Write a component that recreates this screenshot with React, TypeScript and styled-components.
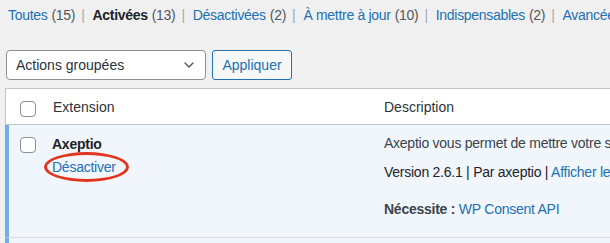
import React from "react";
import styled, { createGlobalStyle } from "styled-components";

const GlobalStyle = createGlobalStyle`
  html, body {
    margin: 0;
    padding: 0;
    background: #f0f0f1;
    overflow: hidden;
  }
  body {
    font-family: "Liberation Sans", Arial, sans-serif;
    font-size: 14px;
    line-height: 20px;
    color: #3c434a;
  }
`;

const Page = styled.div`
  width: 900px;
  padding: 5px 0 0 0;
`;

const Filters = styled.ul`
  display: flex;
  margin: 0 0 0 8px;
  padding: 0;
  list-style: none;
  color: #646970;
  white-space: nowrap;
  letter-spacing: -0.3px;
`;

const FilterItem = styled.li`
  display: flex;
  gap: 4px;
`;

const Sep = styled.span`
  color: #a7aaad;
  margin: 0 4px 0 6px;
`;

const FilterLink = styled.a<{ $current?: boolean }>`
  color: ${(p) => (p.$current ? "#1d2327" : "#2271b1")};
  font-weight: ${(p) => (p.$current ? 700 : 400)};
  text-decoration: none;
`;

const Count = styled.span`
  color: #50575e;
`;

const Toolbar = styled.div`
  display: flex;
  gap: 6px;
  margin: 25px 0 0 6px;
  height: 30px;
`;

const Select = styled.div`
  box-sizing: border-box;
  width: 200px;
  height: 30px;
  border: 1px solid #8c8f94;
  border-radius: 4px;
  background: #fff;
  display: flex;
  align-items: center;
  justify-content: space-between;
  padding: 0 11px 0 9px;
  color: #2c3338;
`;

const Button = styled.button`
  box-sizing: border-box;
  height: 30px;
  width: 80px;
  border: 1px solid #2271b1;
  border-radius: 3px;
  background: #f6f7f7;
  color: #2271b1;
  font: inherit;
  padding: 0;
`;

const Table = styled.div`
  margin: 8px 0 0 5px;
  border-top: 1px solid #c3c4c7;
`;

const Row = styled.div<{ $active?: boolean; $head?: boolean }>`
  display: grid;
  grid-template-columns: ${(p) => (p.$active ? "34px" : "37px")} 331px 1fr;
  background: ${(p) => (p.$active ? "#f0f6fc" : "#fff")};
  border-left: ${(p) => (p.$active ? "4px solid #72aee6" : "1px solid #c3c4c7")};
  border-bottom: 1px solid ${(p) => (p.$head ? "#c3c4c7" : "#dcdcde")};
  height: ${(p) => (p.$head ? "35px" : "112px")};
`;

const CheckCell = styled.div<{ $top: number; $indent: number }>`
  padding: ${(p) => p.$top}px 0 0 ${(p) => p.$indent}px;
`;

const Checkbox = styled.span`
  display: block;
  box-sizing: border-box;
  width: 16px;
  height: 16px;
  border: 1px solid #8c8f94;
  border-radius: 4px;
  background: #fff;
`;

const HeadCell = styled.div`
  padding: 8px 10px 0 10px;
  color: #2c3338;
`;

const NameCell = styled.div`
  padding: 9px 10px 0 9px;
  display: flex;
  flex-direction: column;
  align-items: flex-start;
  gap: 3px;
  letter-spacing: -0.25px;
`;

const PluginTitle = styled.strong`
  color: #1d2327;
  font-weight: 700;
`;

const Circled = styled.span`
  position: relative;
  display: inline-block;
`;

const Ring = styled.span`
  position: absolute;
  left: -8px;
  top: -5px;
  width: 85px;
  height: 30px;
  box-sizing: border-box;
  border: 3px solid #e2351f;
  border-radius: 50%;
`;

const Link = styled.a`
  color: #2271b1;
  text-decoration: none;
`;

const DescCell = styled.div`
  padding: 8px 10px 0 10px;
  white-space: nowrap;
  overflow: hidden;
  letter-spacing: -0.25px;
`;

const Para = styled.p<{ $mt: number }>`
  margin: ${(p) => p.$mt}px 0 0 0;
  color: #3c434a;
`;

const Meta = styled.span`
  color: #1d2327;
`;

const Strong = styled.strong`
  font-weight: 700;
  color: #3c434a;
`;

const Chevron = () => (
  <svg width="10" height="6" viewBox="0 0 10 6" fill="none">
    <path d="M1 1l4 4 4-4" stroke="#50575e" strokeWidth="1.4" strokeLinecap="round" strokeLinejoin="round" />
  </svg>
);

const filters = [
  { label: "Toutes", count: 15 },
  { label: "Activées", count: 13, current: true },
  { label: "Désactivées", count: 2 },
  { label: "À mettre à jour", count: 10 },
  { label: "Indispensables", count: 2 },
  { label: "Avancées", count: 3 },
];

export default function App() {
  return (
    <>
      <GlobalStyle />
      <Page>
        <Filters>
          {filters.map((f, i) => (
            <FilterItem key={f.label}>
              {i > 0 && <Sep>|</Sep>}
              <FilterLink href="#" $current={f.current}>
                {f.label}
              </FilterLink>
              <Count>({f.count})</Count>
            </FilterItem>
          ))}
        </Filters>
        <Toolbar>
          <Select>
            <span>Actions groupées</span>
            <Chevron />
          </Select>
          <Button>Appliquer</Button>
        </Toolbar>
        <Table>
          <Row $head>
            <CheckCell $top={12} $indent={14}>
              <Checkbox />
            </CheckCell>
            <HeadCell>Extension</HeadCell>
            <HeadCell>Description</HeadCell>
          </Row>
          <Row $active>
            <CheckCell $top={12} $indent={11}>
              <Checkbox />
            </CheckCell>
            <NameCell>
              <PluginTitle>Axeptio</PluginTitle>
              <Circled>
                <Ring />
                <Link href="#">Désactiver</Link>
              </Circled>
            </NameCell>
            <DescCell>
              <Para $mt={0}>
                Axeptio vous permet de mettre votre site en conformité avec le RGPD.
              </Para>
              <Para $mt={9}>
                <Meta>Version 2.6.1 | Par axeptio | </Meta>
                <Link href="#">Afficher les détails</Link>
              </Para>
              <Para $mt={17}>
                <Strong>Nécessite :</Strong> <Link href="#">WP Consent API</Link>
              </Para>
            </DescCell>
          </Row>
          <Row $active />
        </Table>
      </Page>
    </>
  );
}
